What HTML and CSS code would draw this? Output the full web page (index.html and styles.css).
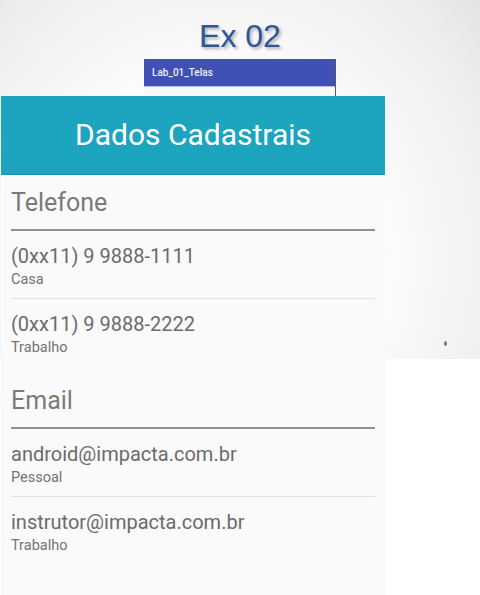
FILE: index.html
```html
<!DOCTYPE html>
<html lang="pt-BR">
<head>
<meta charset="utf-8">
<title>Ex 02</title>
<link rel="stylesheet" href="styles.css">
</head>
<body>
<div class="slide">
  <h1 class="title">Ex 02</h1>
  <div class="phone">
    <div class="appbar">Lab_01_Telas</div>
    <div class="appbar-edge"></div>
    <div class="phone-body"></div>
  </div>
  <div class="card">
    <div class="card-header">Dados Cadastrais</div>
    <div class="card-content">
      <section class="section">
        <h2 class="section-title">Telefone</h2>
        <div class="section-rule"></div>
        <div class="item">
          <div class="item-main">(0xx11) 9 9888-1111</div>
          <div class="item-sub">Casa</div>
        </div>
        <div class="item">
          <div class="item-main">(0xx11) 9 9888-2222</div>
          <div class="item-sub">Trabalho</div>
        </div>
      </section>
      <section class="section section-next">
        <h2 class="section-title">Email</h2>
        <div class="section-rule"></div>
        <div class="item">
          <div class="item-main">android@impacta.com.br</div>
          <div class="item-sub">Pessoal</div>
        </div>
        <div class="item">
          <div class="item-main">instrutor@impacta.com.br</div>
          <div class="item-sub">Trabalho</div>
        </div>
      </section>
    </div>
  </div>
  <span class="dot"></span>
</div>
</body>
</html>
```
FILE: styles.css
```css
html, body {
  margin: 0;
  padding: 0;
  background: #ffffff;
}
.slide {
  position: relative;
  width: 480px;
  height: 595px;
  overflow: hidden;
  background-color: #ffffff;
  background-image: radial-gradient(ellipse 85% 125% at 45% 72%, #ffffff 0%, #fcfcfc 40%, #eeeeee 72%, #d9d9d9 100%);
  background-size: 480px 359px;
  background-repeat: no-repeat;
  font-family: Roboto, "Noto Sans", sans-serif;
}
.title {
  margin: 0;
  padding-top: 18px;
  height: 36px;
  margin-bottom: 5px;
  font-family: "Liberation Sans", Arial, sans-serif;
  font-weight: normal;
  font-size: 32px;
  line-height: 36px;
  text-align: center;
  color: #2f5597;
  text-shadow: 2px 2px 3px rgba(0, 0, 0, 0.3);
}
.phone {
  margin-left: 144px;
  width: 191px;
  border-right: 1px solid #5a5a5a;
}
.appbar {
  height: 27px;
  box-sizing: border-box;
  padding-left: 8px;
  background: #3f51b5;
  color: #eef0fa;
  font-size: 10px;
  font-weight: 500;
  line-height: 27px;
}
.appbar-edge {
  height: 1px;
  background: #b9c0e6;
}
.phone-body {
  height: 9px;
  background: #f7f7f7;
}
.card {
  margin-left: 1px;
  width: 384px;
  height: 499px;
  background: #fafafa;
}
.card-header {
  height: 78px;
  background: #1da4bf;
  border-bottom: 1px solid #1993ab;
  color: #ffffff;
  font-size: 30px;
  line-height: 78px;
  text-align: center;
}
.card-content {
  padding: 0 10px;
}
.section-title {
  margin: 0;
  padding-top: 13px;
  margin-bottom: 11px;
  font-weight: normal;
  font-size: 25px;
  line-height: 30px;
  color: #7a7a7a;
}
.section-next {
  margin-top: 7px;
}
.section-rule {
  height: 2px;
  background: #8f9191;
}
.item {
  padding-top: 13px;
  padding-bottom: 8px;
  border-bottom: 1px solid #e2e2e2;
}
.item:last-child {
  border-bottom: none;
}
.item-main {
  font-size: 20px;
  line-height: 25px;
  color: #6b6b6b;
}
.item-sub {
  font-size: 14.5px;
  line-height: 21px;
  color: #737373;
}
.dot {
  position: absolute;
  left: 444px;
  top: 341px;
  width: 3px;
  height: 5px;
  border-radius: 50%;
  background: #7a7a7a;
}
```
